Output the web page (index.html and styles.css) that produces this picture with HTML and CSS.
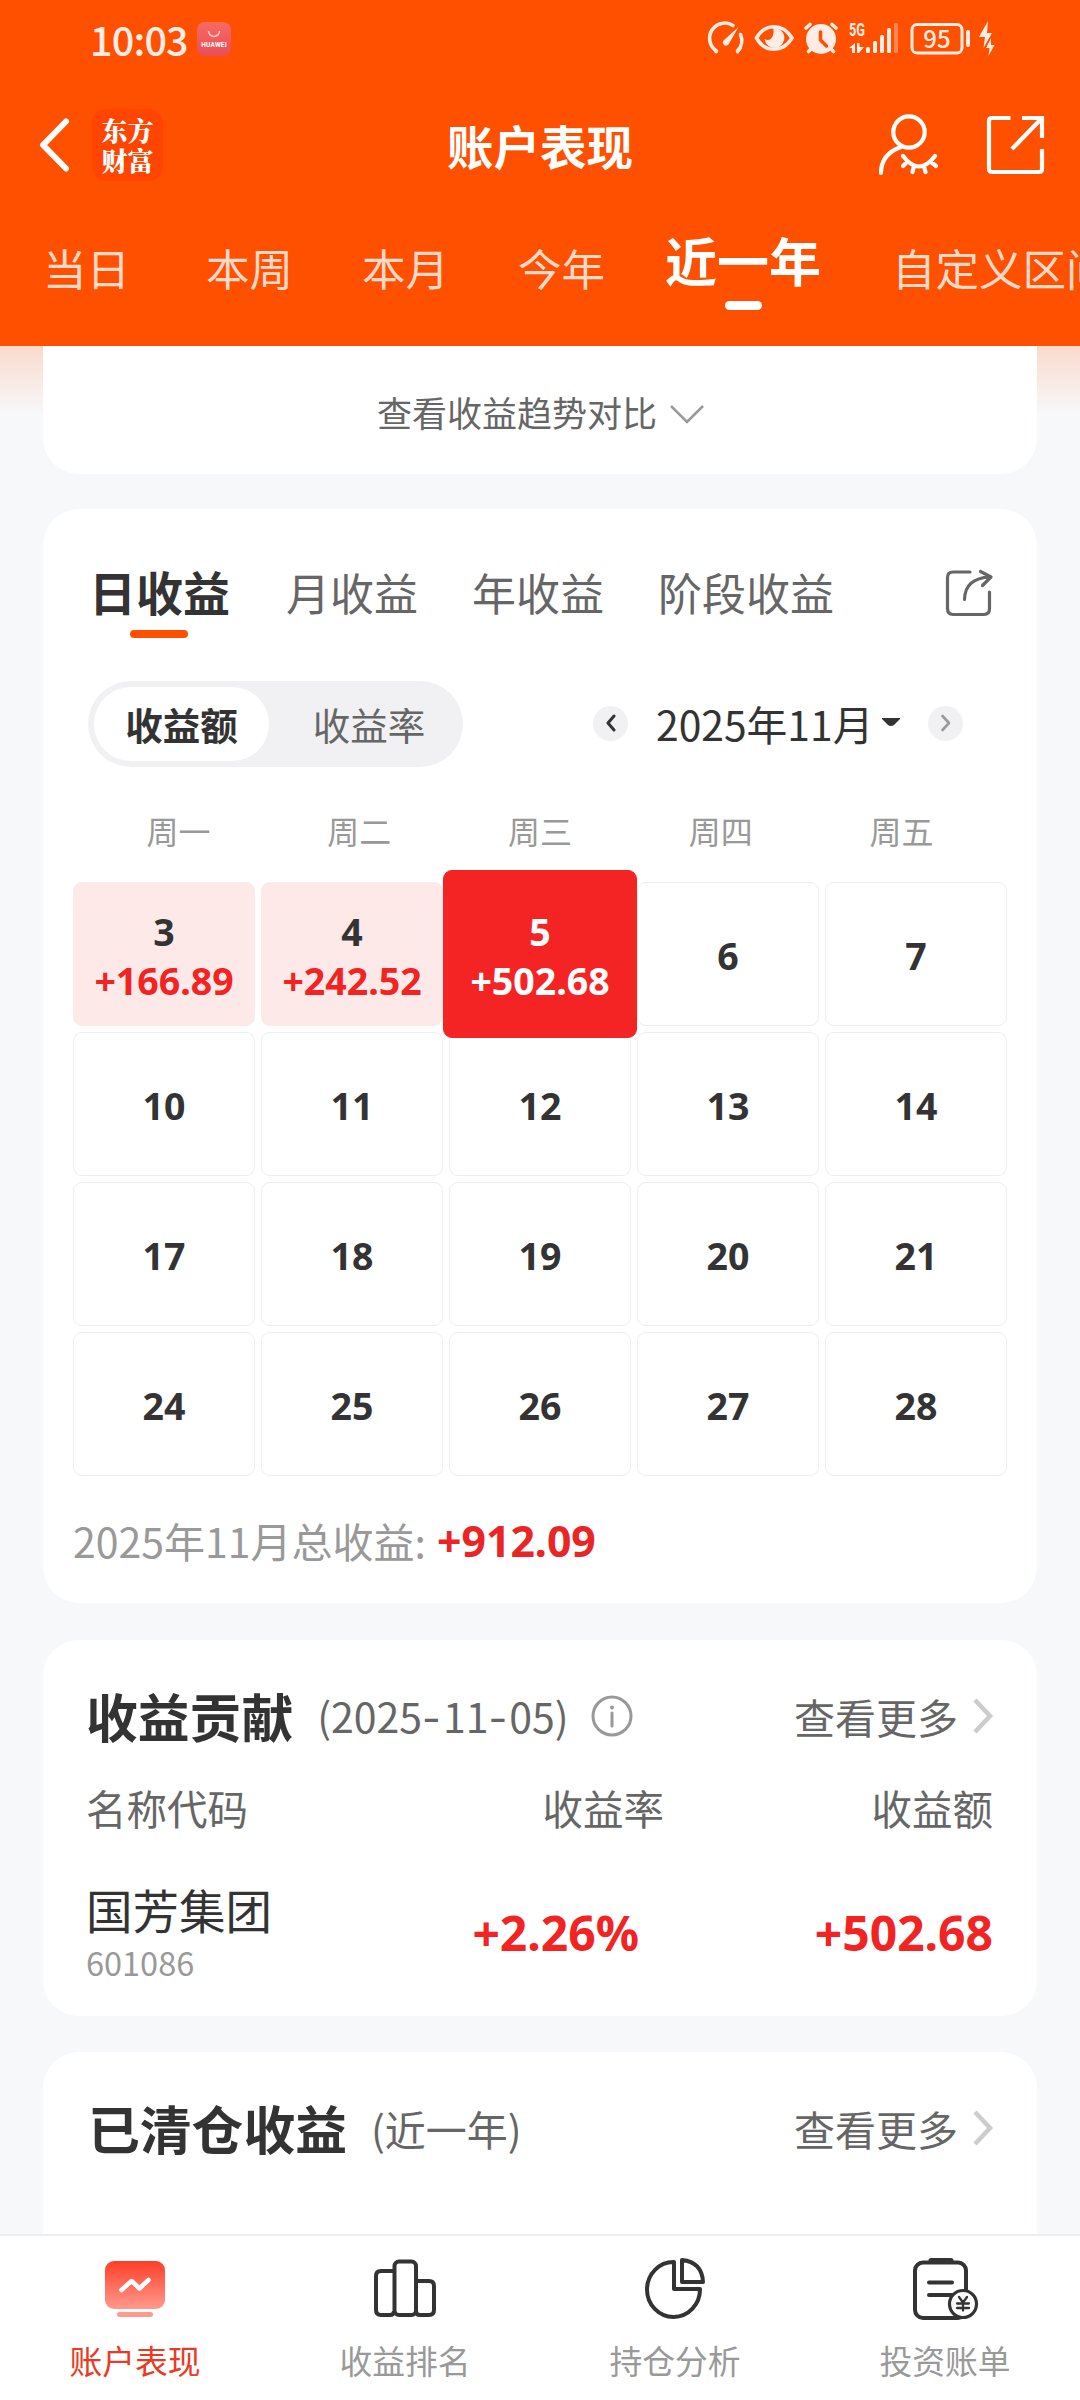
FILE: index.html
```html
<!DOCTYPE html>
<html lang="zh-CN">
<head>
<meta charset="utf-8">
<title>账户表现</title>
<link rel="stylesheet" href="styles.css">
</head>
<body>
<div class="app">
  <header class="header">
    <div class="status">
      <span class="clock">10:03</span>
      <span class="store"><svg width="14" height="8" viewBox="0 0 14 8"><path d="M1.500 1a5.500 5.500 0 0 0 11 0" fill="none" stroke="#fcc" stroke-width="1.500"/></svg><span>HUAWEI</span></span>
      <svg class="status-icons" width="300" height="44" viewBox="700 18 300 44" fill="none" stroke="#ffece4" stroke-width="3.600" stroke-linecap="round">
        <path d="M716.500 52A15 15 0 0 1 733 26.500M740.500 35.500a15 15 0 0 1-3 16.500"/><path d="M713.500 49l2.500 4M740.500 49l-3 4" stroke-width="3"/>
        <path d="M738.500 28l-10 17.500a3.200 3.200 0 1 1-4.500-4.500z" fill="#ffece4" stroke="none"/>
        <path d="M756.500 39C765 24 783 24 792 39C783 54 765 54 756.500 39z"/>
        <path d="M773 29a10 10 0 1 1-8.500 11q5 3 8-2.500 2-4 .5-8.500z" fill="#ffece4" stroke="none"/>
        <circle cx="821" cy="40" r="15" fill="#ffece4" stroke="none"/><path d="M820.500 33v8l6 6" stroke="#ff5000" stroke-width="3.500"/><path d="M806 29l4-3.500M836 29l-4-3.500M808.500 52.500l3-3M833.500 52.500l-3-3"/>
        <g fill="#ffece4" stroke="none">
          <path d="M849 49l6-5v10h-3v-5zM857 44h2.500v4h4.500l-5 6h-2z"/>
          <rect x="866" y="48" width="4" height="6" rx="1.500"/><rect x="873" y="42" width="4" height="12" rx="1.500"/><rect x="880" y="36" width="4" height="18" rx="1.500"/><rect x="887" y="29" width="4" height="25" rx="1.500"/><rect x="894" y="24" width="4" height="30" rx="1.500" opacity=".35"/>
          <rect x="966" y="31" width="4" height="17" rx="2"/>
          <path d="M988 22l-9 16h6l-1.500 11 8.500-15h-5zM991 39l-5 10h3.500l-1 8 6-11h-3.500z"/>
          <text x="849" y="37" font-family="Roboto" font-weight="700" font-size="18.500" textLength="16" lengthAdjust="spacingAndGlyphs">5G</text>
          <text x="937" y="49" text-anchor="middle" font-family="Noto Sans CJK SC" font-weight="500" font-size="24">95</text>
        </g>
        <rect x="912" y="25.500" width="50" height="28.500" rx="5" stroke-width="3"/>
      </svg>
    </div>
    <div class="titlebar">
      <svg class="back" width="32" height="56" viewBox="0 0 32 56"><path d="M28 4.500L5 28l23 23.500" fill="none" stroke="#fff" stroke-width="6" stroke-linecap="round" stroke-linejoin="round"/></svg>
      <div class="logo"><span>东方</span><span>财富</span></div>
      <h1>账户表现</h1>
      <svg class="user" width="62" height="64" viewBox="878 112 62 64" fill="none" stroke="#fff" stroke-width="4.200" stroke-linecap="round"><circle cx="909" cy="131" r="15.700"/><path d="M901 146Q881 153 881 172M903 155Q919 176 935 155M907 161l-4 4M914 165l-1.500 6M924 165l1.500 6M931 161l5 4"/></svg>
      <svg width="60" height="62" viewBox="985 113 60 62" fill="none" stroke="#fff" stroke-width="4.200"><path d="M1010.500 117H992q-3 0-3 3v48q0 3 3 3h47q3 0 3-3V148M1022 117h20v20M1042 117l-30 31"/></svg>
    </div>
    <nav class="periods"><span>当日</span><span>本周</span><span>本月</span><span>今年</span><span class="on">近一年</span><span>自定义区间</span></nav>
  </header>

  <main class="content">
    <section class="card trend"><span>查看收益趋势对比</span><svg width="36" height="22" viewBox="0 0 36 22"><path d="M2 3l16 16L34 3" fill="none" stroke="#999" stroke-width="2.500"/></svg></section>

    <section class="card calendar">
      <div class="tabs">
        <span class="on">日收益</span><span>月收益</span><span>年收益</span><span>阶段收益</span>
        <svg width="50" height="50" viewBox="944 567 50 50" fill="none" stroke="#666" stroke-width="3.200" stroke-linecap="round" stroke-linejoin="round"><path d="M970 571h-17q-5.500 0-5.500 5.500v31q0 6 5.500 6h31q5.500 0 5.500-6V591M964.500 598.500Q965 577 990 576M980.500 570.500l10.500 5.500-8.500 8.500"/></svg>
      </div>
      <div class="controls">
        <div class="toggle"><span class="on">收益额</span><span>收益率</span></div>
        <span class="round"><svg width="12" height="18" viewBox="0 0 12 18"><path d="M9 2L3 9l6 7" fill="none" stroke="#333" stroke-width="3" stroke-linecap="round" stroke-linejoin="round"/></svg></span>
        <span class="month">2025年11月</span>
        <svg class="caret" width="18" height="8" viewBox="0 0 18 8"><path d="M0 0h18v1l-6 6q-3 2-6 0L0 1z" fill="#333"/></svg>
        <span class="round"><svg width="12" height="18" viewBox="0 0 12 18"><path d="M2.500 2L9 9l-6.500 7" fill="none" stroke="#999" stroke-width="2.600" stroke-linecap="round" stroke-linejoin="round"/></svg></span>
      </div>
      <div class="week"><span>周一</span><span>周二</span><span>周三</span><span>周四</span><span>周五</span></div>
      <div class="days">
        <div class="gain">3<b>+166.89</b></div><div class="gain">4<b>+242.52</b></div><div class="gain selected">5<b>+502.68</b></div><div>6</div><div>7</div>
        <div>10</div><div>11</div><div>12</div><div>13</div><div>14</div>
        <div>17</div><div>18</div><div>19</div><div>20</div><div>21</div>
        <div>24</div><div>25</div><div>26</div><div>27</div><div>28</div>
      </div>
      <div class="total"><span>2025年11月总收益:</span><b>+912.09</b></div>
    </section>

    <section class="card contribution">
      <div class="heading"><h2>收益贡献</h2><span class="sub">(2025<i>-</i>11<i>-</i>05)</span>
        <svg class="info" width="42" height="42" viewBox="0 0 42 42"><circle cx="21" cy="21" r="19" fill="none" stroke="#999" stroke-width="3"/><circle cx="21" cy="12.500" r="2" fill="#999"/><path d="M21 18v13" stroke="#999" stroke-width="3" stroke-linecap="round"/></svg>
        <span class="more">查看更多</span><svg width="22" height="36" viewBox="0 0 22 36"><path d="M3 2l15 16L3 34" fill="none" stroke="#ccc" stroke-width="4.500"/></svg></div>
      <div class="cols"><span>名称代码</span><span>收益率</span><span>收益额</span></div>
      <div class="stock"><div class="name">国芳集团<small>601086</small></div><b>+2.26%</b><b>+502.68</b></div>
    </section>

    <section class="card cleared">
      <div class="heading"><h2>已清仓收益</h2><span class="sub">(近一年)</span>
        <span class="more">查看更多</span><svg width="22" height="36" viewBox="0 0 22 36"><path d="M3 2l15 16L3 34" fill="none" stroke="#ccc" stroke-width="4.500"/></svg></div>
    </section>
  </main>

  <nav class="bottom">
    <div class="on"><svg width="70" height="66" viewBox="100 2255 70 66"><defs><linearGradient id="g" x1="0" y1="0" x2="0" y2="1"><stop offset="0" stop-color="#ff3e28"/><stop offset="1" stop-color="#ff9a8d"/></linearGradient></defs><rect x="105" y="2261" width="60" height="48" rx="9" fill="url(#g)"/><rect x="117" y="2312" width="36" height="5" rx="2.500" fill="#ff9a8d"/><path d="M121.500 2290l10-9 8 7.500 9-8.500" fill="none" stroke="#fff" stroke-width="4.500" stroke-linecap="round" stroke-linejoin="round"/></svg><span>账户表现</span></div>
    <div><svg width="70" height="66" viewBox="370 2255 70 66" fill="none" stroke="#333" stroke-width="4"><path d="M394 2271h-13q-5 0-5 5v34q0 5 5 5h9q4 0 4-4"/><rect x="394.500" y="2261.500" width="21.500" height="53.500" rx="4.500"/><path d="M416 2281h13q5 0 5 5v24q0 5-5 5h-9q-4 0-4-4"/></svg><span>收益排名</span></div>
    <div><svg width="70" height="66" viewBox="640 2255 70 66" fill="none" stroke="#333" stroke-width="4" stroke-linejoin="round"><path d="M674 2262v27h26a26.500 27.500 0 1 1-26-27zM682 2260q20 2 21 22h-21z"/></svg><span>持仓分析</span></div>
    <div><svg width="70" height="66" viewBox="910 2255 70 66" fill="none" stroke="#333" stroke-width="4" stroke-linecap="round"><rect x="915" y="2262.500" width="51" height="55.500" rx="8"/><path d="M931 2260.500h20" stroke-width="5"/><path d="M929 2282.500h23M929 2295h23"/><circle cx="963" cy="2304" r="13.500" fill="#fff" stroke-width="3.200"/><path d="M959 2297l4 5.500 4-5.500M963 2302.500v8M957 2303.500h12M957 2308h12" stroke-width="2.300"/></svg><span>投资账单</span></div>
  </nav>
</div>
</body>
</html>
```
FILE: styles.css
```css
* { box-sizing: border-box; }
body { margin: 0; font-family: "Noto Sans CJK SC", sans-serif; color: #333; }
h1, h2 { margin: 0; }
svg { display: block; flex: none; }
span { white-space: nowrap; }
.app { width: 1080px; height: 2400px; display: flex; flex-direction: column; overflow: hidden; background: #f7f8fa; }

.header { height: 346px; flex: none; background: #ff5000; color: #fff; overflow: hidden; }
.status { height: 78px; display: flex; align-items: center; padding: 0 80px 0 90px; }
.clock { width: 107px; font-size: 39.500px; font-weight: 500; line-height: 78px; letter-spacing: -.8px; color: #ffece4; }
.store { width: 34px; height: 34px; border-radius: 8px; background: linear-gradient(#f86a61, #e94e5a); display: flex; flex-direction: column; align-items: center; justify-content: center; gap: 3px; font: 700 6.500px/8px Roboto, sans-serif; letter-spacing: .2px; color: #fff; }
.status-icons { margin-left: auto; }
.titlebar { height: 134px; display: flex; align-items: center; padding: 0 35px 0 38px; }
.logo { width: 71px; height: 72px; margin-left: 22px; border-radius: 14px; background: #ff4500; display: flex; flex-direction: column; align-items: center; justify-content: center; font: 900 26px/30px "Noto Serif CJK SC", "Noto Sans CJK SC", sans-serif; }
.titlebar h1 { margin-left: 284px; font-size: 46.500px; line-height: 70px; }
.user { margin-left: auto; margin-right: 45px; }
.periods { height: 134px; display: flex; font-size: 43.500px; line-height: 112px; color: #ffdac9; padding-left: 43px; }
.periods span { margin-right: 69px; }
.periods span:first-child { margin-right: 76px; }
.periods span:nth-child(4) { margin-right: 60px; }
.periods .on { margin-right: 71px; color: #fff; font-size: 52px; font-weight: 700; line-height: 96px; display: flex; flex-direction: column; align-items: center; }
.periods .on::after { content: ""; width: 37px; height: 9px; margin-top: -7px; border-radius: 5px; background: #fff; }

.content { flex: 1; overflow: hidden; padding: 0 43px; background: linear-gradient(#fadacd, #f7f8fa 68px); }
.card { background: #fff; border-radius: 36px; }
.trend { height: 128px; margin-bottom: 35px; border-radius: 0 0 36px 36px; display: flex; justify-content: center; gap: 12px; padding: 5px 0 0 2px; font-size: 35px; line-height: 122px; color: #666; }
.trend svg { margin-top: 52px; }

.calendar { height: 1094px; padding: 0 30px; margin-bottom: 37px; }
.tabs { height: 150px; display: flex; align-items: center; gap: 54px; padding: 16px 13px 0 16px; font-size: 44px; color: #666; }
.tabs svg { margin: 2px 0 0 auto; }
.tabs .on { height: 85px; margin: 2px 2px 0 0; line-height: 80px; font-size: 47px; font-weight: 700; color: #333; position: relative; }
.tabs .on::after { content: ""; position: absolute; left: 41px; top: 79px; width: 58px; height: 8px; border-radius: 4px; background: #ff5000; }
.controls { height: 86px; margin-top: 22px; display: flex; align-items: center; padding: 0 30px 0 15px; }
.toggle { width: 375px; height: 86px; margin-right: 130px; padding: 6px; border-radius: 43px; background: #f1f1f4; display: flex; font-size: 37.500px; line-height: 73px; color: #666; }
.toggle span { flex: 1; text-align: center; padding-left: 12px; }
.toggle .on { flex: none; width: 175px; padding: 0; border-radius: 37px; background: #fff; color: #333; font-weight: 700; }
.round { width: 35px; height: 35px; margin-top: -2px; border-radius: 50%; background: #f1f1f4; display: grid; place-items: center; }
.month { margin-left: 28px; font-size: 40.800px; line-height: 82px; }
.caret { margin: -4px 28px 0 9px; }
.week { margin: 33px 15px 0; display: grid; grid-template-columns: repeat(5, 1fr); text-align: center; font-size: 32px; line-height: 60px; color: #999; }
.days { margin-top: 22px; display: grid; grid-template-columns: repeat(5, 182px); grid-auto-rows: 144px; gap: 6px; font: 700 37.500px/49px "Noto Sans", sans-serif; }
.days div { border: 1px solid #eee; border-radius: 9px; padding-top: 3px; display: flex; flex-direction: column; align-items: center; justify-content: center; }
.days b { font-weight: 700; }
.days .gain { background: #fde9e8; border-color: #fde9e8; }
.gain b { color: #f22323; }
.days .selected { position: relative; z-index: 1; margin: -12px -6px; background: #f42424; border-color: #f42424; color: #fff; }
.selected b { color: #fff; }
.total { height: 128px; display: flex; align-items: center; font-size: 41px; color: #999; }
.total b { margin: 2px 0 0 11px; font: 700 42.800px/60px "Noto Sans", sans-serif; color: #ea2525; }

.contribution { height: 376px; padding: 38px 44px 0 43px; margin-bottom: 36px; }
.heading { height: 76px; display: flex; align-items: center; font-size: 41px; line-height: 76px; color: #666; }
.heading h2 { font-size: 51.800px; color: #333; }
.sub { margin-left: 24px; }
.sub i { font-family: Inter, sans-serif; font-style: normal; margin-right: 2px; }
.info { margin-left: 22px; }
.more { margin-left: auto; margin-right: 14px; }
.heading svg:last-child { margin-right: -1px; }
.cols { display: grid; grid-template-columns: 300px 278px 1fr; font-size: 40.500px; line-height: 60px; margin-top: 24px; color: #666; }
.cols span + span { text-align: right; }
.stock { display: grid; grid-template-columns: 300px 253px 1fr; align-items: center; height: 110px; margin-top: 37px; }
.stock > b { padding-top: 5px; text-align: right; font: 700 48px/60px "Noto Sans", sans-serif; color: #f22323; }
.name { font-size: 46.500px; line-height: 62px; }
.name small { display: block; font-size: 32.500px; line-height: 43px; color: #999; }
.cleared { height: 250px; padding: 38px 44px 0 45px; }

.bottom { height: 166px; flex: none; border-top: 2px solid #ebedf0; background: #fff; display: grid; grid-template-columns: repeat(4, 1fr); font-size: 32.800px; color: #999; }
.bottom div { display: flex; flex-direction: column; align-items: center; padding-top: 19px; }
.bottom span { line-height: 50px; margin-top: 14px; }
.bottom .on { color: #ea3a24; }
```
